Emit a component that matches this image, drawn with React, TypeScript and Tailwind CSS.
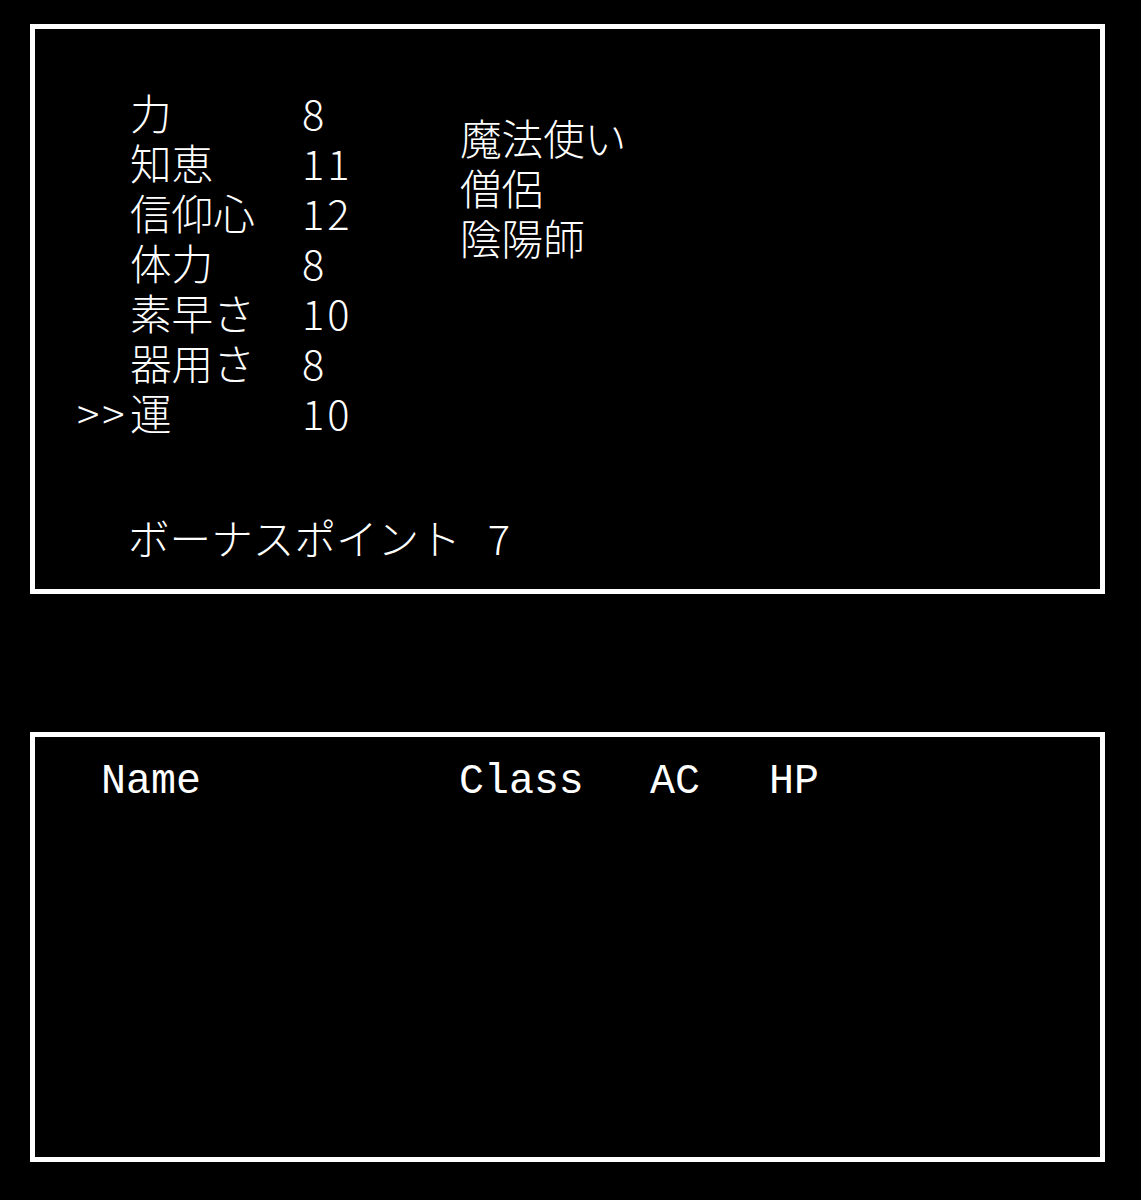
const stats = [
  { label: "力", value: 8 },
  { label: "知恵", value: 11 },
  { label: "信仰心", value: 12 },
  { label: "体力", value: 8 },
  { label: "素早さ", value: 10 },
  { label: "器用さ", value: 8 },
  { label: "運", value: 10 },
];

const classes = ["魔法使い", "僧侶", "陰陽師"];

const selected = 6;

function StatusPanel() {
  return (
    <div className="h-[570px] border-[5px] border-white pt-[58px] pl-[45px] text-white text-[41.6px] leading-[50px] font-light font-['Noto_Sans_CJK_JP',sans-serif]">
      <div className="flex">
        <div className="w-[380px]">
          {stats.map((s, i) => (
            <div key={s.label} className="flex h-[50px]">
              <span className="w-[50px] text-right tracking-[3px] -ml-[3px] mr-[3px]">{i === selected ? ">>" : ""}</span>
              <span className="w-[172px]">{s.label}</span>
              <span className="tracking-[3px]">{s.value}</span>
            </div>
          ))}
        </div>
        <div className="pt-[25px]">
          {classes.map((c) => (
            <div key={c} className="h-[50px]">
              {c}
            </div>
          ))}
        </div>
      </div>
      <div className="mt-[75px] flex pl-[48px] gap-[27px]">
        <span>ボーナスポイント</span>
        <span>7</span>
      </div>
    </div>
  );
}

function PartyPanel() {
  return (
    <div className="h-[430px] border-[5px] border-white pt-[20px] pl-[66px] text-white text-[41.6px] leading-[50px] font-['Liberation_Mono',monospace]">
      <div className="flex">
        <span className="w-[358px]">Name</span>
        <span className="w-[191px]">Class</span>
        <span className="w-[119px]">AC</span>
        <span>HP</span>
      </div>
    </div>
  );
}

export default function App() {
  return (
    <div className="min-h-[1200px] bg-black pt-[24px] pl-[30px] pr-[36px]">
      <StatusPanel />
      <div className="h-[138px]" />
      <PartyPanel />
    </div>
  );
}
